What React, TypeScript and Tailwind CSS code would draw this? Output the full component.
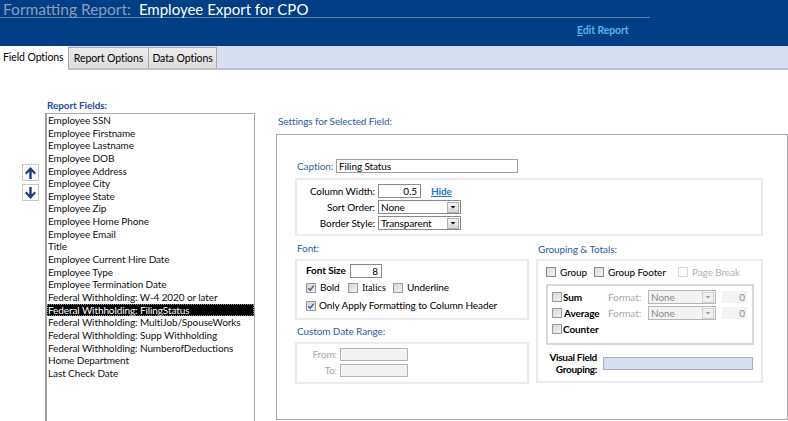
import React from "react";

const FONT = { fontFamily: 'Lato, "Noto Sans", sans-serif' };

const fields = [
  "Employee SSN",
  "Employee Firstname",
  "Employee Lastname",
  "Employee DOB",
  "Employee Address",
  "Employee City",
  "Employee State",
  "Employee Zip",
  "Employee Home Phone",
  "Employee Email",
  "Title",
  "Employee Current Hire Date",
  "Employee Type",
  "Employee Termination Date",
  "Federal Withholding: W-4 2020 or later",
  "Federal Withholding: FilingStatus",
  "Federal Withholding: MultiJob/SpouseWorks",
  "Federal Withholding: Supp Withholding",
  "Federal Withholding: NumberofDeductions",
  "Home Department",
  "Last Check Date",
];

function Check({ checked = false, faded = false, dark = false }: { checked?: boolean; faded?: boolean; dark?: boolean }) {
  return (
    <div
      className={
        "w-[10px] h-[10px] shrink-0 border flex items-center justify-center " +
        (faded
          ? "border-[#d8d8d8] bg-white"
          : dark
          ? "border-[#8a8a8a] bg-gradient-to-br from-[#dcdcdc] to-[#f4f4f4]"
          : "border-[#9a9a9a] bg-gradient-to-br from-[#d4d4d4] to-[#f2f2f2]")
      }
    >
      {checked && (
        <svg width="8" height="8" viewBox="0 0 8 8">
          <path d="M1.2 4.2 L3.2 6.2 L6.8 1.6" fill="none" stroke="#3f5f9f" strokeWidth="1.5" />
        </svg>
      )}
    </div>
  );
}

function Select({ value, w, faded = false }: { value: string; w: string; faded?: boolean }) {
  return (
    <div
      className={
        "h-[14px] shrink-0 border flex items-center " +
        w +
        (faded ? " border-[#b8b8b8] bg-[#f3f3f3] text-[#8a8a8a]" : " border-[#8a8a8a] bg-white text-black")
      }
    >
      <span className="flex-1 pl-[2px] leading-[12px] truncate">{value}</span>
      <div
        className={
          "w-[12px] h-[11px] mr-[1px] flex items-center justify-center border " +
          (faded ? "border-[#d0d0d0] bg-[#f0f0f0]" : "border-[#b0b0b0] bg-gradient-to-b from-[#f4f4f4] to-[#d8d8d8]")
        }
      >
        <svg width="6" height="4" viewBox="0 0 6 4">
          <path d="M0.5 1 L5.5 1 L3 3.5 Z" fill={faded ? "#a0a0a0" : "#111"} />
        </svg>
      </div>
    </div>
  );
}

function ArrowBtn({ up }: { up: boolean }) {
  return (
    <div className="w-[17px] h-[17px] border border-[#c8c8c8] bg-white flex items-center justify-center">
      <svg width="13" height="14" viewBox="0 0 13 14">
        {up ? (
          <path d="M6.5 1 L1 7 L2.6 8.5 L5.3 5.6 L5.3 13 L7.7 13 L7.7 5.6 L10.4 8.5 L12 7 Z" fill="#1a3f7a" />
        ) : (
          <path d="M6.5 13 L1 7 L2.6 5.5 L5.3 8.4 L5.3 1 L7.7 1 L7.7 8.4 L10.4 5.5 L12 7 Z" fill="#1a3f7a" />
        )}
      </svg>
    </div>
  );
}

export default function App() {
  return (
    <div className="w-[788px] h-[421px] overflow-hidden bg-white text-[10px] tracking-[-0.1px] text-black whitespace-nowrap" style={FONT}>
      {/* Header */}
      <div className="h-[46px] bg-[#003f85] flex flex-col">
        <div className="w-[650px] h-[18px] border-b border-[#6a7fa6] pl-[3px] flex items-center tracking-normal">
          <span className="text-[15.5px] leading-[18px] text-[#8d9bbb]">Formatting Report:</span>
          <span className="text-[15px] leading-[18px] text-white ml-[8px]">Employee Export for CPO</span>
        </div>
        <div className="pl-[577px] pt-[5px]">
          <span className="text-[10.5px] font-bold text-[#5ab2ee] leading-[13px]">
            <span className="underline">E</span>dit Report
          </span>
        </div>
      </div>

      {/* Tabs */}
      <div className="h-[24px] bg-[#d6deef] border-b-2 border-[#bcbfc8] flex items-end">
        <div className="h-[24px] w-[68px] bg-white flex items-start pt-[5px] pl-[3px] -mb-[2px] relative z-10">
          <span className="text-[10.5px] leading-[13px]">Field Options</span>
        </div>
        <div className="h-[21px] w-[81px] bg-gradient-to-b from-[#ececec] to-[#dcdcdc] border border-[#a8a8a8] border-b-0 flex items-center justify-center">
          <span className="text-[10.5px] leading-[13px]">Report Options</span>
        </div>
        <div className="h-[21px] w-[68px] bg-gradient-to-b from-[#ececec] to-[#dcdcdc] border border-[#a8a8a8] border-b-0 border-l-0 flex items-center justify-center">
          <span className="text-[10.5px] leading-[13px]">Data Options</span>
        </div>
      </div>

      {/* Content */}
      <div className="flex">
        {/* Left column */}
        <div className="w-[276px] shrink-0 flex">
          <div className="w-[45px] shrink-0 pl-[22px] pt-[94px] flex flex-col gap-[3px]">
            <ArrowBtn up />
            <ArrowBtn up={false} />
          </div>
          <div className="flex flex-col">
            <div className="pt-[29px] pl-[2px] h-[43px] font-bold text-[#1f4e9a] leading-[13px]">Report Fields:</div>
            <div className="w-[210px] h-[320px] border-t border-r border-[#a9a9a9] border-l-2 border-l-[#a0a0a0]">
              {fields.map((f, i) => (
                <div
                  key={f}
                  className={
                    "h-[12.65px] leading-[12.65px] pl-[1px] " +
                    (i === 15 ? "bg-black text-white outline-1 outline-dotted outline-[#888] -outline-offset-1" : "text-[#111]")
                  }
                >
                  {f}
                </div>
              ))}
            </div>
          </div>
        </div>

        {/* Right column */}
        <div className="flex-1 flex flex-col">
          <div className="pt-[45px] pl-[2px] h-[64px] text-[#2b5ea6] leading-[13px]">Settings for Selected Field:</div>
          <div className="w-[512px] h-[286px] border border-[#a8a8ae] pl-[18px] pt-[24px]">
            {/* Caption */}
            <div className="flex items-center h-[14px] pl-[2px]">
              <span className="text-[#3a5f96] w-[39px] shrink-0">Caption:</span>
              <div className="w-[182px] h-[14px] shrink-0 border border-[#a0a0a0] pl-[2px] leading-[12px]">Filing Status</div>
            </div>
            {/* Column width box */}
            <div className="mt-[5px] w-[468px] h-[58px] border-2 border-[#ebebeb] pt-[4px] flex flex-col gap-[2px]">
              <div className="flex items-center h-[14px]">
                <span className="w-[81px] shrink-0 text-right pr-[3px]">Column Width:</span>
                <div className="w-[43px] h-[14px] shrink-0 border border-[#8a8a8a] text-right pr-[3px] leading-[12px]">0.5</div>
                <span className="ml-[10px] font-bold text-[#1f6fd6] underline">Hide</span>
              </div>
              <div className="flex items-center h-[14px]">
                <span className="w-[81px] shrink-0 text-right pr-[3px]">Sort Order:</span>
                <Select value="None" w="w-[83px]" />
              </div>
              <div className="flex items-center h-[14px]">
                <span className="w-[81px] shrink-0 text-right pr-[3px]">Border Style:</span>
                <Select value="Transparent" w="w-[83px]" />
              </div>
            </div>

            {/* Two columns */}
            <div className="flex gap-[7px] mt-[5px]">
              <div className="w-[234px] flex flex-col">
                <div className="h-[18px] pl-[2px] pt-[1px] text-[#2b5ea6] leading-[13px]">Font:</div>
                <div className="h-[61px] border-2 border-[#ebebeb] pl-[9px] pt-[2px]">
                  <div className="flex items-center h-[15px]">
                    <span className="font-bold w-[44px] shrink-0">Font Size</span>
                    <div className="w-[32px] h-[14px] shrink-0 border border-[#8a8a8a] text-right pr-[3px] leading-[12px]">8</div>
                  </div>
                  <div className="flex items-center h-[15px] mt-[2px]">
                    <Check checked />
                    <span className="ml-[4px] w-[28px] shrink-0">Bold</span>
                    <Check />
                    <span className="ml-[4px] w-[31px] shrink-0" style={{ fontFamily: '"Liberation Serif", serif' }}>Italics</span>
                    <Check />
                    <span className="ml-[4px]">Underline</span>
                  </div>
                  <div className="flex items-center h-[15px] mt-[3px]">
                    <Check checked />
                    <span className="ml-[3px]">Only Apply Formatting to Column Header</span>
                  </div>
                </div>
                <div className="h-[22px] pl-[2px] pt-[5px] text-[#2b5ea6] leading-[13px]">Custom Date Range:</div>
                <div className="h-[42px] border-2 border-[#ebebeb] pt-[4px] flex flex-col gap-[3px]">
                  <div className="flex items-center h-[13px]">
                    <span className="w-[43px] shrink-0 text-right pr-[3px] text-[#a8a8a8]">From:</span>
                    <div className="w-[68px] h-[13px] border border-[#b4b4b4] bg-[#f3f3f3]" />
                  </div>
                  <div className="flex items-center h-[13px]">
                    <span className="w-[43px] shrink-0 text-right pr-[3px] text-[#a8a8a8]">To:</span>
                    <div className="w-[68px] h-[13px] border border-[#b4b4b4] bg-[#f3f3f3]" />
                  </div>
                </div>
              </div>

              <div className="w-[227px] flex flex-col">
                <div className="h-[18px] pl-[2px] pt-[2px] text-[#2b5ea6] leading-[13px]">Grouping &amp; Totals:</div>
                <div className="h-[124px] border-2 border-[#ebebeb] pl-[8px] pt-[4px]">
                  <div className="flex items-center h-[14px]">
                    <Check dark />
                    <span className="ml-[4px] w-[34px] shrink-0">Group</span>
                    <Check dark />
                    <span className="ml-[4px] w-[70px] shrink-0">Group Footer</span>
                    <Check faded />
                    <span className="ml-[4px] text-[#b0b0b0]">Page Break</span>
                  </div>
                  <div className="mt-[5px] w-[208px] h-[61px] border-2 border-[#d8d8d8] pl-[4px] pt-[4px] flex flex-col gap-[2px]">
                    <div className="flex items-center h-[14px]">
                      <Check />
                      <span className="font-bold w-[45px] shrink-0 ml-[1px]">Sum</span>
                      <span className="text-[#a8a8a8] w-[40px] shrink-0">Format:</span>
                      <Select value="None" w="w-[68px]" faded />
                      <div className="ml-[6px] w-[25px] h-[12px] bg-[#f3f3f3] text-right pr-[2px] text-[#8a8a8a] leading-[12px]">0</div>
                    </div>
                    <div className="flex items-center h-[14px]">
                      <Check />
                      <span className="font-bold w-[44px] shrink-0 ml-[2px]">Average</span>
                      <span className="text-[#a8a8a8] w-[40px] shrink-0">Format:</span>
                      <Select value="None" w="w-[68px]" faded />
                      <div className="ml-[6px] w-[25px] h-[12px] bg-[#f3f3f3] text-right pr-[2px] text-[#8a8a8a] leading-[12px]">0</div>
                    </div>
                    <div className="flex items-center h-[14px]">
                      <Check />
                      <span className="font-bold ml-[1px]">Counter</span>
                    </div>
                  </div>
                  <div className="flex items-center mt-[6px]">
                    <div className="w-[51px] shrink-0 text-right font-bold leading-[12px] text-[10px] tracking-[-0.3px]">
                      Visual Field
                      <br />
                      Grouping:
                    </div>
                    <div className="ml-[6px] w-[150px] h-[13px] bg-[#d6deef] border border-[#a8aec0]" />
                  </div>
                </div>
              </div>
            </div>
          </div>
        </div>
      </div>
    </div>
  );
}
